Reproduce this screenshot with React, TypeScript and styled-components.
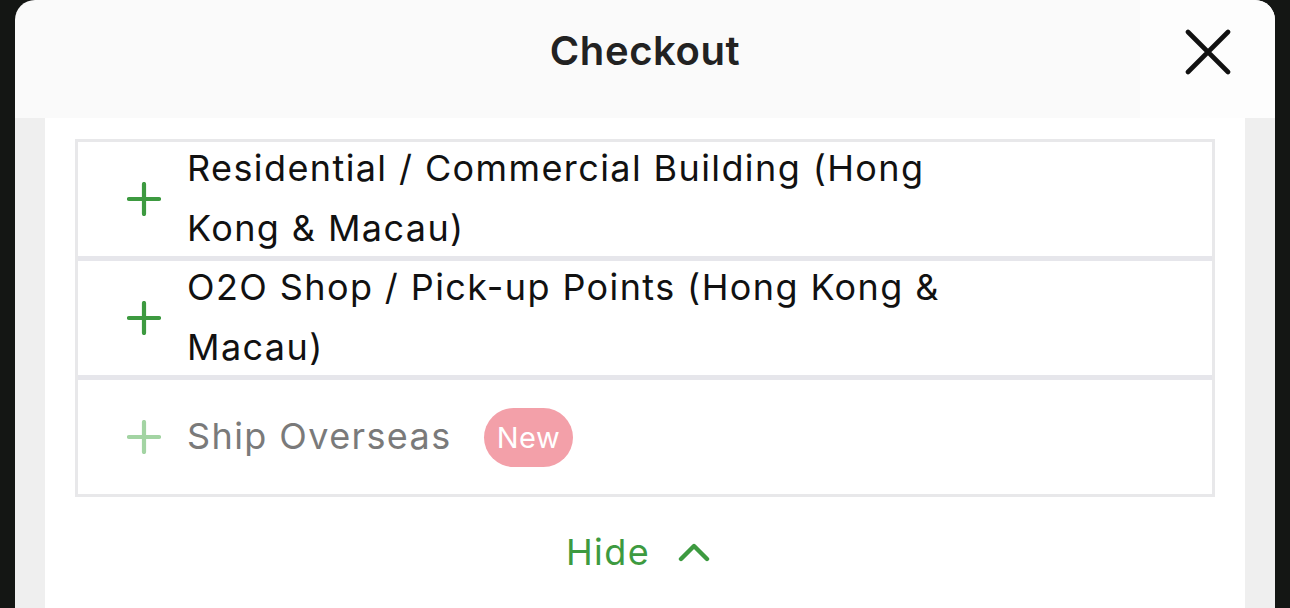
import styled, { createGlobalStyle } from "styled-components";

type Option = {
    label: string;
    disabled?: boolean;
    badge?: string;
};

const options: Option[] = [
    { label: "Residential / Commercial Building (Hong Kong & Macau)" },
    { label: "O2O Shop / Pick-up Points (Hong Kong & Macau)" },
    { label: "Ship Overseas", disabled: true, badge: "New" },
];

const GlobalStyle = createGlobalStyle`
    html, body {
        margin: 0;
        padding: 0;
        background: #141614;
        overflow: hidden;
    }
    body {
        font-family: "Inter", "Open Sans", sans-serif;
        -webkit-font-smoothing: antialiased;
    }
`;

const PlusIcon = ({ faded }: { faded?: boolean }) => (
    <PlusSvg viewBox="0 0 34 34" $faded={faded}>
        <path d="M17 2 V32 M2 17 H32" stroke="currentColor" strokeWidth="4.2" strokeLinecap="round" fill="none"/>
    </PlusSvg>
);

export default function App() {
    return (
        <>
            <GlobalStyle/>
            <Page>
                <Modal>
                    <Header>
                        <span/>
                        <Title>Checkout</Title>
                        <CloseButton aria-label="Close">
                            <svg width="46" height="46" viewBox="0 0 46 46">
                                <path d="M3 3 L43 43 M43 3 L3 43" stroke="#111" strokeWidth="4.6" strokeLinecap="round" fill="none"/>
                            </svg>
                        </CloseButton>
                    </Header>
                    <Body>
                        <Panel>
                            <OptionList>
                                {options.map((o) => (
                                    <OptionRow key={o.label}>
                                        <PlusIcon faded={o.disabled}/>
                                        <OptionLabel $disabled={o.disabled}>{o.label}</OptionLabel>
                                        {o.badge && <Badge>{o.badge}</Badge>}
                                    </OptionRow>
                                ))}
                            </OptionList>
                            <HideToggle>
                                Hide
                                <svg width="32" height="22" viewBox="0 0 32 22">
                                    <path d="M3 18 L16 5 L29 18" stroke="currentColor" strokeWidth="4.4" strokeLinecap="round" strokeLinejoin="round" fill="none"/>
                                </svg>
                            </HideToggle>
                        </Panel>
                    </Body>
                </Modal>
            </Page>
        </>
    );
}

const Page = styled.div`
    width: 1290px;
    height: 608px;
    padding: 0 15px;
    box-sizing: border-box;
`;
const Modal = styled.div`
    height: 100%;
    border-top-left-radius: 20px;
    border-top-right-radius: 20px;
    overflow: hidden;
    display: flex;
    flex-direction: column;
`;
const Header = styled.div`
    height: 118px;
    flex: none;
    display: grid;
    grid-template-columns: 135px 1fr 135px;
    background: #fafafa;
`;
const Title = styled.h1`
    margin: 0;
    align-self: center;
    padding-bottom: 18px;
    text-align: center;
    font-size: 40px;
    font-weight: 600;
    letter-spacing: 0.6px;
    color: #222;
`;
const CloseButton = styled.button`
    border: none;
    padding: 0 0 14px;
    background: #fdfdfd;
    display: flex;
    align-items: center;
    justify-content: center;
    cursor: pointer;
`;
const Body = styled.div`
    flex: 1;
    background: #efefef;
    padding: 0 30px;
    display: flex;
`;
const Panel = styled.div`
    flex: 1;
    background: #fff;
    padding: 21px 30px 0;
    display: flex;
    flex-direction: column;
`;
const OptionList = styled.div`
    border: 3px solid #e8e8ea;
    display: flex;
    flex-direction: column;
`;
const OptionRow = styled.div`
    height: 114px;
    display: flex;
    align-items: center;
    padding-left: 49px;

    & + & {
        border-top: 5px solid #e6e6eb;
    }
`;
const PlusSvg = styled.svg<{ $faded?: boolean }>`
    width: 34px;
    height: 34px;
    flex: none;
    color: ${(p) => (p.$faded ? "#a3d4a3" : "#3d9a40")};
    margin-right: 26px;
`;
const OptionLabel = styled.span<{ $disabled?: boolean }>`
    max-width: 790px;
    font-size: 36px;
    letter-spacing: 1.4px;
    line-height: 60px;
    margin-top: -3px;
    color: ${(p) => (p.$disabled ? "#7a7a7a" : "#111")};
`;
const Badge = styled.span`
    margin-left: 32px;
    height: 59px;
    padding: 0 13px;
    border-radius: 30px;
    background: #f3a0a9;
    color: #fff;
    font-size: 29px;
    letter-spacing: 0.6px;
    display: flex;
    align-items: center;
`;
const HideToggle = styled.button`
    align-self: center;
    margin-top: 33px;
    margin-right: 14px;
    border: none;
    background: none;
    padding: 0;
    display: flex;
    align-items: center;
    gap: 28px;
    font-family: inherit;
    font-size: 36px;
    letter-spacing: 1.4px;
    color: #3d9a40;
    cursor: pointer;
`;
